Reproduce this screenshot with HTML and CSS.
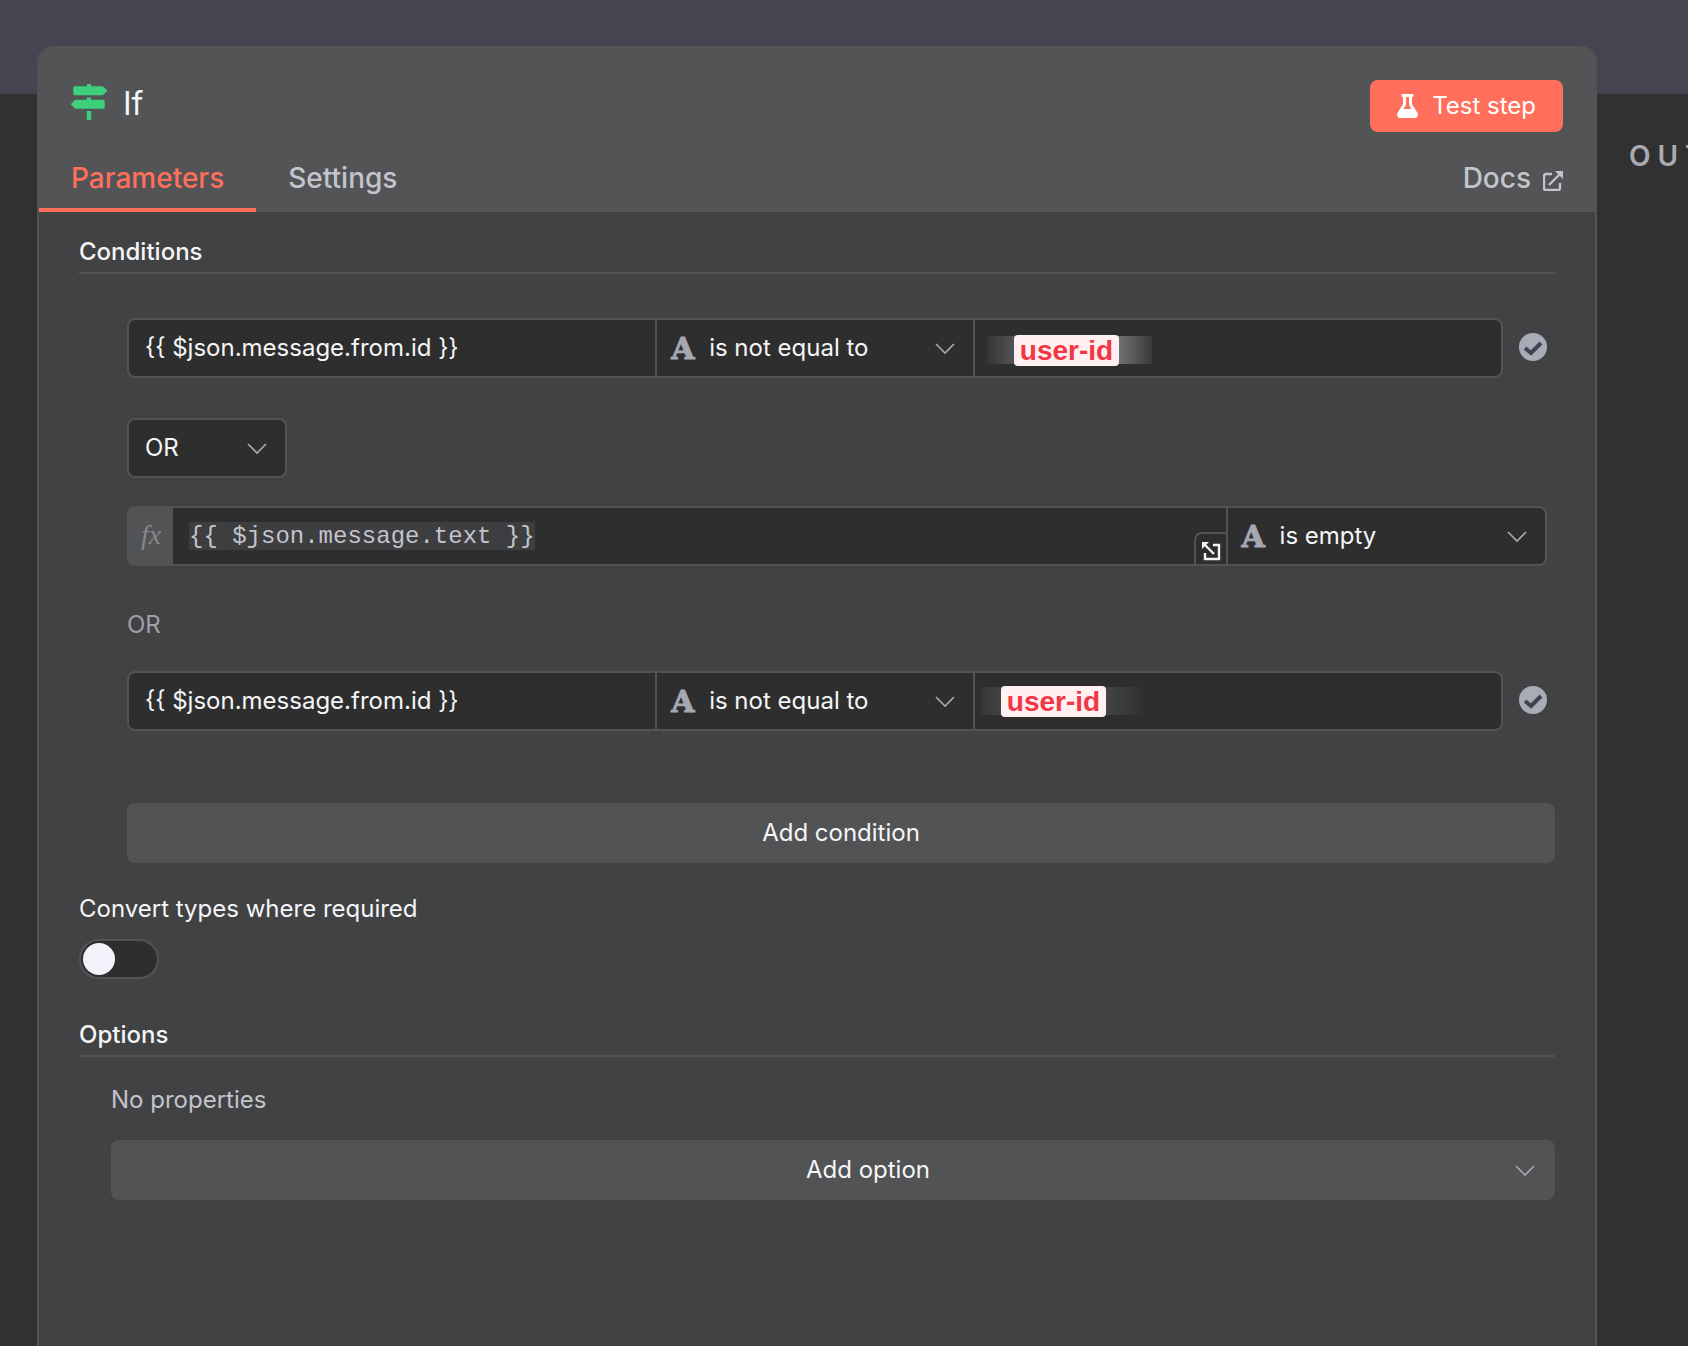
FILE: index.html
```html
<!DOCTYPE html>
<html lang="en">
<head>
    <meta charset="UTF-8">
    <meta name="viewport" content="width=device-width, initial-scale=1.0">
    <title>If</title>
    <link rel="stylesheet" href="styles.css">
</head>
<body>
    <main class="workspace">
        <section class="panel">
            <header class="panel-header">
                <div class="title-row">
                    <svg class="node-icon" viewBox="0 0 512 512" aria-hidden="true"><path d="M507.31 84.69L464 41.37c-6-6-14.14-9.37-22.63-9.37H288V16c0-8.84-7.16-16-16-16h-32c-8.84 0-16 7.16-16 16v16H56c-13.25 0-24 10.75-24 24v80c0 13.25 10.75 24 24 24h385.37c8.49 0 16.62-3.37 22.63-9.37l43.31-43.31c6.25-6.26 6.25-16.38 0-22.63zM224 496c0 8.84 7.16 16 16 16h32c8.84 0 16-7.16 16-16V384h-64v112zm232-272H288v-32h-64v32H70.63c-8.49 0-16.62 3.37-22.63 9.37L4.69 276.69c-6.25 6.25-6.25 16.38 0 22.63L48 342.63c6 6 14.14 9.37 22.63 9.37H456c13.25 0 24-10.75 24-24v-80c0-13.25-10.75-24-24-24z"/></svg>
                    <h1 class="title">If</h1>
                    <button class="test-btn" type="button">
                        <svg class="flask" viewBox="0 0 448 512" aria-hidden="true"><path d="M437.2 403.5L320 215V64h8c13.3 0 24-10.7 24-24V24c0-13.3-10.7-24-24-24H120c-13.3 0-24 10.7-24 24v16c0 13.3 10.7 24 24 24h8v151L10.8 403.5C-18.5 450.6 15.3 512 70.9 512h306.2c55.7 0 89.4-61.5 60.1-108.5zM137.9 320l48.2-77.6c3.7-5.2 5.8-11.6 5.8-18.4V64h64v160c0 6.9 2.2 13.2 5.8 18.4l48.2 77.6h-172z"/></svg>
                        Test step
                    </button>
                </div>
                <nav class="tabs">
                    <a class="tab active" href="#parameters">Parameters</a>
                    <a class="tab" href="#settings">Settings</a>
                    <a class="tab docs" href="#docs">Docs
                        <svg class="external" viewBox="0 0 20 20" aria-hidden="true"><path d="M9 3H3Q1 3 1 5V17Q1 19 3 19H15Q17 19 17 17V12M6 14L17 3"/><path class="head" d="M12 0H20V8Z"/></svg>
                    </a>
                </nav>
            </header>

            <form class="params" id="parameters">
                <h2 class="section-title">Conditions</h2>
                <div class="conditions">
                    <div class="condition">
                        <div class="fields">
                            <input class="cell" type="text" aria-label="Value 1" value="{{ $json.message.from.id }}">
                            <div class="select-wrap operator">
                                <span class="type-icon" aria-hidden="true">A</span>
                                <select class="cell" aria-label="Operator"><option>is not equal to</option></select>
                                <svg class="chevron" viewBox="0 0 20 12" aria-hidden="true"><path d="M1 1L10 10L19 1"/></svg>
                            </div>
                            <div class="value-wrap">
                                <input class="cell" type="text" aria-label="Value 2">
                                <span class="mask"><mark class="masked">user-id</mark></span>
                            </div>
                        </div>
                        <svg class="check" viewBox="0 0 28 28" aria-hidden="true"><circle cx="14" cy="14" r="14"/><path d="M6 15L12 20L22 10"/></svg>
                    </div>

                    <div class="select-wrap combinator">
                        <select class="cell" aria-label="Combinator"><option>OR</option><option>AND</option></select>
                        <svg class="chevron" viewBox="0 0 20 12" aria-hidden="true"><path d="M1 1L10 10L19 1"/></svg>
                    </div>

                    <div class="condition single">
                        <div class="fields">
                            <div class="expression">
                                <span class="fx">fx</span>
                                <div class="editor">
                                    <input class="code" type="text" aria-label="Expression" value="{{ $json.message.text }}">
                                </div>
                                <button class="expand" type="button" aria-label="Open editor">
                                    <svg viewBox="0 0 20 20" aria-hidden="true"><path d="M12 4H18V18H4V12M3 3L13 13"/><path class="head" d="M1 1H8L1 8Z"/></svg>
                                </button>
                            </div>
                            <div class="select-wrap operator">
                                <span class="type-icon" aria-hidden="true">A</span>
                                <select class="cell" aria-label="Operator"><option>is empty</option></select>
                                <svg class="chevron" viewBox="0 0 20 12" aria-hidden="true"><path d="M1 1L10 10L19 1"/></svg>
                            </div>
                        </div>
                    </div>

                    <p class="combinator-text">OR</p>

                    <div class="condition">
                        <div class="fields">
                            <input class="cell" type="text" aria-label="Value 1" value="{{ $json.message.from.id }}">
                            <div class="select-wrap operator">
                                <span class="type-icon" aria-hidden="true">A</span>
                                <select class="cell" aria-label="Operator"><option>is not equal to</option></select>
                                <svg class="chevron" viewBox="0 0 20 12" aria-hidden="true"><path d="M1 1L10 10L19 1"/></svg>
                            </div>
                            <div class="value-wrap">
                                <input class="cell" type="text" aria-label="Value 2">
                                <span class="mask faded"><mark class="masked">user-id</mark></span>
                            </div>
                        </div>
                        <svg class="check" viewBox="0 0 28 28" aria-hidden="true"><circle cx="14" cy="14" r="14"/><path d="M6 15L12 20L22 10"/></svg>
                    </div>

                    <button class="add-btn" type="button">Add condition</button>
                </div>

                <label class="switch-label" for="convert">Convert types where required</label>
                <input class="switch" id="convert" type="checkbox" role="switch">

                <h2 class="section-title">Options</h2>
                <div class="options">
                    <p class="empty">No properties</p>
                    <div class="select-wrap">
                        <select class="add-option" aria-label="Add option"><option>Add option</option></select>
                        <svg class="chevron" viewBox="0 0 20 12" aria-hidden="true"><path d="M1 1L10 10L19 1"/></svg>
                    </div>
                </div>
            </form>
        </section>

        <aside class="output">
            <h2 class="output-title">OUTPUT</h2>
        </aside>
    </main>
</body>
</html>
```

FILE: styles.css
```css
* {
    box-sizing: border-box;
}

body {
    margin: 0;
    background: linear-gradient(#464450 94px, #313131 94px);
    color: #f5f5f7;
    font-family: Inter, sans-serif;
    font-size: 24px;
    line-height: 32px;
}

h1, h2, p {
    margin: 0;
}

input, select, button {
    font: inherit;
    color: inherit;
    margin: 0;
}

svg {
    display: block;
    flex: none;
}

.workspace {
    display: flex;
    min-height: 100vh;
    padding: 46px 0 0 37px;
}

.panel {
    flex: 1;
    min-width: 0;
    border: 2px solid #525355;
    border-top: none;
    border-bottom: none;
    border-radius: 16px 16px 0 0;
    background-color: #414244;
    overflow: hidden;
}

.panel-header {
    background-color: #525456;
}

.title-row {
    display: flex;
    align-items: center;
    gap: 16px;
    padding: 34px 32px 0;
}

.node-icon {
    width: 36px;
    height: 36px;
    margin-bottom: 8px;
    fill: #3dcf7c;
}

.title {
    flex: 1;
    padding-bottom: 4px;
    font-size: 32px;
    font-weight: 400;
    line-height: 40px;
}

.test-btn {
    display: flex;
    align-items: center;
    gap: 14px;
    height: 52px;
    padding: 0 27px;
    border: none;
    border-radius: 8px;
    background-color: #ff6f5c;
    color: #fff;
    cursor: pointer;
}

.flask {
    width: 21px;
    height: 24px;
    fill: #fff;
}

.tabs {
    display: flex;
    padding-top: 16px;
}

.tab {
    height: 64px;
    padding: 10px 32px 0;
    border-bottom: 4px solid transparent;
    color: #c3c4cc;
    font-size: 28px;
    font-weight: 500;
    line-height: 40px;
    text-decoration: none;
}

.tab.active {
    border-color: #ff6f5c;
    color: #ff6f5c;
}

.docs {
    display: flex;
    gap: 12px;
    margin-left: auto;
}

.external {
    width: 20px;
    height: 20px;
    margin-top: 13px;
    fill: none;
    stroke: #c3c4cc;
    stroke-width: 2.4;
}

.external .head {
    fill: #c3c4cc;
    stroke: none;
}

.params {
    padding: 24px 40px;
}

.section-title {
    padding-bottom: 4px;
    border-bottom: 2px solid #525355;
    font-size: 24px;
    font-weight: 500;
}

.conditions {
    padding: 44px 0 0 48px;
}

.condition {
    display: flex;
    align-items: center;
    gap: 16px;
    padding-right: 8px;
}

.fields {
    display: grid;
    flex: 1;
    grid-template-columns: 5fr 3fr 5fr;
    gap: 2px;
    min-width: 0;
    height: 60px;
    padding: 2px;
    border-radius: 8px;
    background-color: #525355;
    overflow: hidden;
}

.single .fields {
    grid-template-columns: 38fr 11fr;
}

.cell {
    width: 100%;
    height: 100%;
    padding: 0 16px;
    border: none;
    border-radius: 0;
    background-color: #2e2e2e;
    appearance: none;
}

.fields > .cell:first-child {
    padding-bottom: 2px;
    border-radius: 6px 0 0 6px;
}

.select-wrap,
.value-wrap {
    position: relative;
    min-width: 0;
}

.operator .cell {
    padding-left: 52px;
}

.value-wrap .cell,
.single .operator .cell {
    border-radius: 0 6px 6px 0;
}

/* icons lie over the native select */
.chevron {
    position: absolute;
    top: calc(50% - 5px);
    right: 20px;
    width: 20px;
    height: 12px;
    fill: none;
    stroke: #a9aab1;
    stroke-width: 1.6;
    pointer-events: none;
}

.operator .chevron {
    right: 18px;
}

.type-icon {
    position: absolute;
    top: 13px;
    left: 14px;
    color: #a5a8b2;
    font-family: "DejaVu Serif", serif;
    font-size: 30px;
    font-weight: 700;
    -webkit-text-stroke: 1px #a5a8b2;
    pointer-events: none;
}

.mask {
    position: absolute;
    top: 16px;
    left: 12px;
    display: flex;
    align-items: center;
    width: 165px;
    height: 28px;
    padding-left: 27px;
    background: linear-gradient(90deg, #353535, #606262 25%, #707272 80%, #3a3a3a);
}

.mask.faded {
    top: 14px;
    left: 6px;
    padding-left: 20px;
    background: linear-gradient(90deg, #353535, #525454 25%, #484a4a 70%, #2e2e2e);
}

.masked {
    padding: 0 6px;
    border-radius: 4px;
    background-color: #fff0f1;
    color: #f23645;
    font-family: "Liberation Sans", sans-serif;
    font-size: 28px;
    font-weight: 700;
    line-height: 31px;
}

.check {
    width: 28px;
    height: 28px;
    margin-bottom: 2px;
    fill: #a9abb6;
}

.check path {
    fill: none;
    stroke: #414350;
    stroke-width: 4;
}

.combinator {
    width: 160px;
    height: 60px;
    margin: 40px 0 28px;
}

.combinator .cell {
    border: 2px solid #525355;
    border-radius: 8px;
}

.expression {
    position: relative;
    display: flex;
    min-width: 0;
    background-color: #2e2e2e;
}

.fx {
    width: 44px;
    background-color: #525355;
    color: #85878d;
    font-family: "Liberation Serif", serif;
    font-size: 28px;
    font-style: italic;
    line-height: 54px;
    text-align: center;
}

.editor {
    display: flex;
    flex: 1;
    align-items: center;
    padding-left: 16px;
}

.code {
    width: 24ch;
    height: 28px;
    padding: 2px 0 0;
    border: none;
    background-color: #3d3e3f;
    color: #c3c4cc;
    font-family: "Liberation Mono", monospace;
}

.expand {
    position: absolute;
    right: 0;
    bottom: 0;
    width: 32px;
    height: 32px;
    padding: 7px 5px;
    border: 2px solid #525355;
    border-width: 2px 0 0 2px;
    border-radius: 8px 0 0 0;
    background-color: #2e2e2e;
}

.expand svg {
    width: 20px;
    height: 20px;
    fill: none;
    stroke: #f5f5f7;
    stroke-width: 2.4;
}

.expand .head {
    fill: #f5f5f7;
    stroke: none;
}

.combinator-text {
    padding: 43px 0 30px;
    color: #a0a1a8;
}

.add-btn,
.add-option {
    display: block;
    width: 100%;
    height: 60px;
    border: none;
    border-radius: 8px;
    background-color: #525355;
    cursor: pointer;
}

.add-btn {
    margin: 72px 0 30px;
}

.switch-label {
    display: block;
}

.switch {
    display: flex;
    align-items: center;
    width: 80px;
    height: 40px;
    margin: 14px 0 40px;
    padding: 0 2px;
    border: 2px solid #525355;
    border-radius: 20px;
    background-color: #2e2e2e;
    appearance: none;
    cursor: pointer;
}

.switch::before {
    content: "";
    width: 32px;
    height: 32px;
    border-radius: 50%;
    background-color: #f2f3fa;
}

.switch:checked {
    justify-content: flex-end;
}

.options {
    padding: 27px 0 0 32px;
}

.empty {
    padding-bottom: 24px;
    color: #c3c4cc;
}

.add-option {
    padding: 0 0 0 70px;
    text-align-last: center;
    appearance: none;
}

.output {
    width: 91px;
    padding: 94px 0 0 32px;
    overflow: hidden;
}

.output-title {
    color: #a9aab3;
    font-size: 28px;
    font-weight: 600;
    letter-spacing: 7px;
}
```
